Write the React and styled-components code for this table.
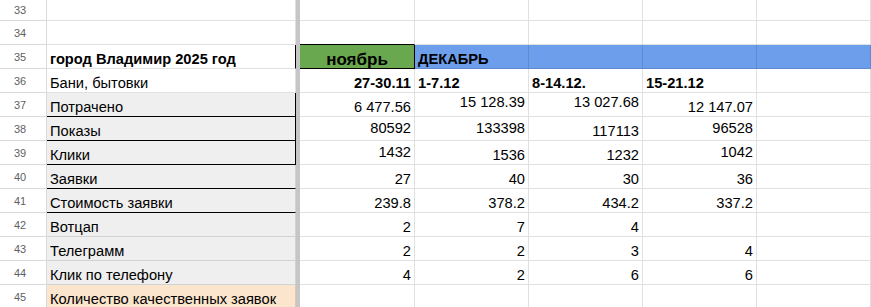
import React from 'react';
import styled, { createGlobalStyle } from 'styled-components';

const GRID = 'rgba(0,0,0,0.12)';
const DARK = '#000';
const GRAY = '#efefef';
const PEACH = '#fce5cd';
const GREEN = '#6aa84f';
const BLUE = '#6d9eeb';

const Global = createGlobalStyle`
  html, body {
    margin: 0;
    padding: 0;
    background: #fff;
    overflow: hidden;
  }
  body {
    font-family: "Liberation Sans", Arial, sans-serif;
  }
`;

const Sheet = styled.div`
  display: grid;
  grid-template-columns: 47px 249px 4px 115px 114px 114px 114px 1fr;
  grid-template-rows: 21px repeat(12, 24px);
  width: 871px;
  height: 307px;
  overflow: hidden;
  background: #fff;
`;

const RowNum = styled.div`
  box-sizing: border-box;
  display: flex;
  align-items: center;
  justify-content: center;
  padding-right: 6px;
  border-right: 1px solid #dadada;
  border-bottom: 1px solid #dadada;
  font-size: 11px;
  color: #5f5f5f;
`;

const FreezeBar = styled.div`
  grid-column: 3;
  grid-row: 1 / -1;
  background: #c6c6c6;
`;

const justify = { left: 'flex-start', right: 'flex-end', center: 'center' };
const valign = { top: 'flex-start', middle: 'center', bottom: 'flex-end' };

const Cell = styled.div`
  box-sizing: border-box;
  display: flex;
  justify-content: ${p => justify[p.$align || 'left']};
  align-items: ${p => valign[p.$valign || 'bottom']};
  padding: ${p => (p.$valign === 'top' ? '1px' : '0')} 3px 0 3px;
  background: ${p => p.$bg || '#fff'};
  border-right: 1px solid ${p => p.$br || GRID};
  border-bottom: 1px solid ${p => p.$bb || GRID};
  font-size: ${p => (p.$big ? '17px' : '14.67px')};
  font-weight: ${p => (p.$bold ? 700 : 400)};
  line-height: 17px;
  color: #000;
  white-space: nowrap;
  overflow: hidden;
`;

const num = (v, va = 'bottom') => ({ t: v, align: 'right', valign: va });
const label = (t, extra = {}) => ({ t, bg: GRAY, ...extra });

const rows = [
  { n: 33, cells: [] },
  { n: 34, cells: [{}, { bb: DARK }] },
  {
    n: 35,
    cells: [
      { t: 'город Владимир 2025 год', bold: true, br: DARK },
      { t: 'ноябрь', bold: true, big: true, align: 'center', bg: GREEN, bb: DARK, br: DARK },
      { t: 'ДЕКАБРЬ', bold: true, bg: BLUE },
      { bg: BLUE },
      { bg: BLUE },
      { bg: BLUE },
    ],
  },
  {
    n: 36,
    cells: [
      { t: 'Бани, бытовки' },
      { t: '27-30.11', bold: true, align: 'right' },
      { t: '1-7.12', bold: true },
      { t: '8-14.12.', bold: true },
      { t: '15-21.12', bold: true },
    ],
  },
  {
    n: 37,
    cells: [
      label('Потрачено', { br: DARK, bb: DARK }),
      num('6 477.56'),
      num('15 128.39', 'top'),
      num('13 027.68', 'top'),
      num('12 147.07'),
    ],
  },
  {
    n: 38,
    cells: [
      label('Показы', { br: DARK, bb: DARK }),
      num('80592', 'middle'),
      num('133398', 'middle'),
      num('117113'),
      num('96528', 'middle'),
    ],
  },
  {
    n: 39,
    cells: [
      label('Клики', { br: DARK, bb: DARK }),
      num('1432', 'middle'),
      num('1536'),
      num('1232'),
      num('1042', 'middle'),
    ],
  },
  { n: 40, cells: [label('Заявки', { bb: DARK }), num('27'), num('40'), num('30'), num('36')] },
  {
    n: 41,
    cells: [label('Стоимость заявки', { bb: DARK }), num('239.8'), num('378.2'), num('434.2'), num('337.2')],
  },
  { n: 42, cells: [label('Вотцап'), num('2'), num('7'), num('4'), {}] },
  { n: 43, cells: [label('Телеграмм'), num('2'), num('2'), num('3'), num('4')] },
  { n: 44, cells: [label('Клик по телефону'), num('4'), num('2'), num('6'), num('6')] },
  { n: 45, cells: [{ t: 'Количество качественных заявок', bg: PEACH }] },
];

const COLS = 6;

const App = () => (
  <>
    <Global />
    <Sheet>
      <FreezeBar />
      {rows.map((row, r) => (
        <React.Fragment key={row.n}>
          <RowNum style={{ gridRow: r + 1 }}>{row.n}</RowNum>
          {Array.from({ length: COLS }).map((_, c) => {
            const cell = row.cells[c] || {};
            return (
              <Cell
                key={c}
                style={{ gridRow: r + 1, gridColumn: c === 0 ? 2 : c + 3 }}
                $align={cell.align}
                $valign={cell.valign}
                $bg={cell.bg}
                $br={cell.br}
                $bb={cell.bb}
                $bold={cell.bold}
                $big={cell.big}
              >
                {cell.t}
              </Cell>
            );
          })}
        </React.Fragment>
      ))}
    </Sheet>
  </>
);

export default App;
